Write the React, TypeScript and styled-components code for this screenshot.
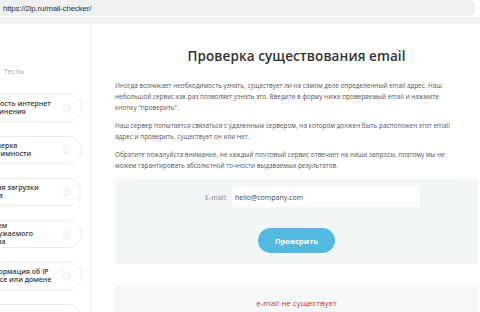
import React from "react";
import styled, { createGlobalStyle } from "styled-components";
import { Star } from "lucide-react";

const GlobalStyle = createGlobalStyle`
  html, body {
    margin: 0;
    padding: 0;
    background: #ffffff;
    font-family: "Open Sans", "Liberation Sans", sans-serif;
    overflow: hidden;
  }
`;

const Window = styled.div`
  width: 480px;
  height: 312px;
  display: flex;
  flex-direction: column;
  overflow: hidden;
`;

const AddressBar = styled.div`
  height: 16px;
  margin-right: 4px;
  background: #eef1f0;
  border-radius: 0 8px 8px 0;
  display: flex;
  align-items: center;
  padding-left: 3px;
  font-family: "Liberation Sans", Arial, sans-serif;
  font-size: 8px;
  letter-spacing: -0.2px;
  color: #333;
`;

const Strip = styled.div`
  height: 7px;
  margin-top: 1px;
  background: #f1f4f3;
`;

const Page = styled.div`
  flex: 1;
  display: flex;
  min-height: 0;
`;

const Sidebar = styled.aside`
  width: 90px;
  flex: 0 0 90px;
  border-right: 1px solid #f0f0f0;
  overflow: hidden;
  padding-top: 43px;
`;

const SectionLabel = styled.div`
  padding-left: 4px;
  font-size: 7px;
  color: #a8a8a8;
  height: 10px;
  line-height: 10px;
  margin-bottom: 17px;
`;

const CardList = styled.div`
  display: flex;
  flex-direction: column;
  gap: 14px;
  margin-left: -30px;
  width: 112px;
`;

const Card = styled.div`
  height: 28px;
  box-sizing: border-box;
  border: 1px solid #ececec;
  border-radius: 14px;
  background: #fff;
  display: flex;
  align-items: center;
  padding: 0 10px 0 12px;
  gap: 4px;
`;

const CardText = styled.div`
  flex: 1;
  font-size: 7px;
  font-weight: 600;
  line-height: 8px;
  color: #3a3a3a;
  white-space: pre-line;
`;

const Main = styled.main`
  flex: 1;
  padding: 22px 2px 0 24px;
  display: flex;
  flex-direction: column;
`;

const Title = styled.h1`
  margin: 0 0 14px;
  text-align: center;
  font-size: 13.5px;
  font-weight: 600;
  letter-spacing: 0.1px;
  line-height: 20px;
  color: #333;
`;

const Paragraph = styled.p`
  margin: 0 0 7px;
  width: 337px;
  font-size: 6.4px;
  line-height: 11px;
  color: #555;
`;

const FormBox = styled.div`
  margin-top: 1px;
  background: #f3f6f7;
  padding: 8px 0 11px;
  display: flex;
  flex-direction: column;
  align-items: stretch;
  gap: 21px;
`;

const FieldRow = styled.label`
  display: flex;
  align-items: center;
`;

const FieldLabel = styled.span`
  flex: 0 0 112px;
  margin-right: 5px;
  text-align: right;
  font-size: 7px;
  color: #888;
`;

const Input = styled.input`
  width: 188px;
  height: 20px;
  box-sizing: border-box;
  border: none;
  outline: none;
  background: #fff;
  padding: 0 3px;
  font-family: "Open Sans", "Liberation Sans", sans-serif;
  font-size: 7px;
  color: #444;
`;

const CheckButton = styled.button`
  align-self: center;
  width: 77px;
  height: 25px;
  border: none;
  border-radius: 13px;
  background: #52b9e1;
  color: #fff;
  font-family: "Open Sans", "Liberation Sans", sans-serif;
  font-size: 7.5px;
  font-weight: 700;
`;

const ResultBox = styled.div`
  margin-top: 22px;
  background: #f5f7f8;
  height: 40px;
  padding-top: 11px;
  box-sizing: border-box;
  text-align: center;
  font-size: 8px;
  font-weight: 500;
  color: #cf2f2f;
`;

const tests = [
  "Скорость интернет\nсоединения",
  "Проверка\nанонимности",
  "Время загрузки\nсайта",
  "Объем\nзагружаемого\nфайла",
  "Информация об IP\nадресе или домене",
  "Проверка порта",
];

function App() {
  return (
    <>
      <GlobalStyle />
      <Window>
        <AddressBar>https://2ip.ru/mail-checker/</AddressBar>
        <Strip />
        <Page>
          <Sidebar>
            <SectionLabel>Тесты</SectionLabel>
            <CardList>
              {tests.map((t) => (
                <Card key={t}>
                  <CardText>{t}</CardText>
                  <Star size={9} strokeWidth={1.4} color="#d6d6d6" />
                </Card>
              ))}
            </CardList>
          </Sidebar>
          <Main>
            <Title>Проверка существования email</Title>
            <Paragraph>
              Иногда возникает необходимость узнать, существует ли на самом деле определенный email адрес. Наш
              небольшой сервис как раз позволяет узнать это. Введите в форму ниже проверяемый email и нажмите
              кнопку "проверить".
            </Paragraph>
            <Paragraph>
              Наш сервер попытается связаться с удаленным сервером, на котором должен быть расположен этот email
              адрес и проверить, существует он или нет.
            </Paragraph>
            <Paragraph>
              Обратите пожалуйста внимание, не каждый почтовый сервис отвечает на наши запросы, поэтому мы не
              можем гарантировать абсолютной точности выдаваемых результатов.
            </Paragraph>
            <FormBox>
              <FieldRow>
                <FieldLabel>E-mail:</FieldLabel>
                <Input defaultValue="hello@company.com" />
              </FieldRow>
              <CheckButton>Проверить</CheckButton>
            </FormBox>
            <ResultBox>e-mail не существует</ResultBox>
          </Main>
        </Page>
      </Window>
    </>
  );
}

export default App;
